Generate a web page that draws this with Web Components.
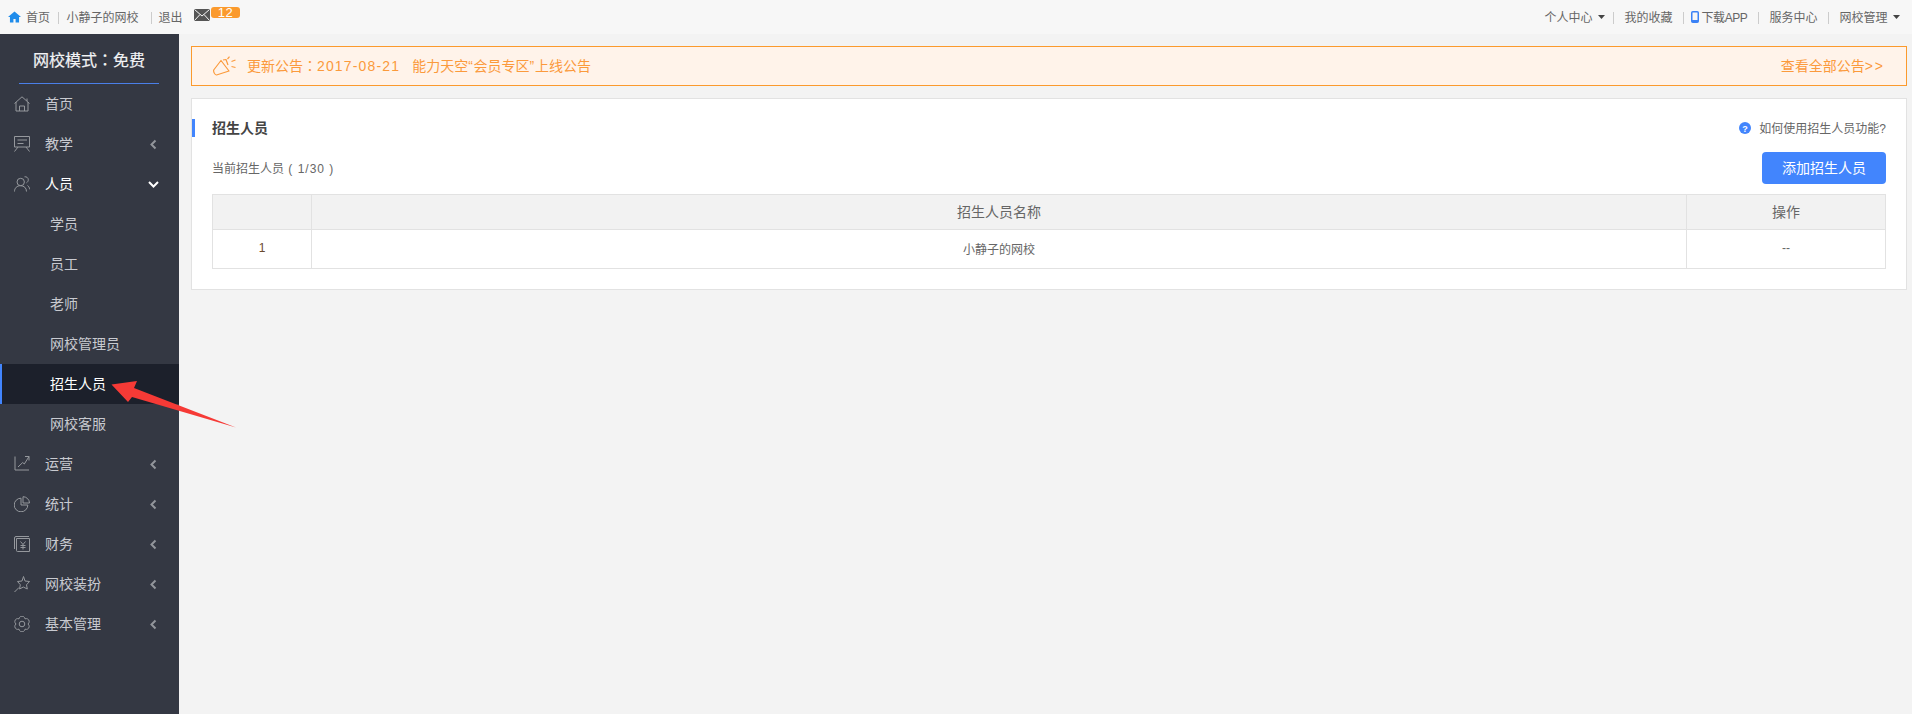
<!DOCTYPE html>
<html lang="zh-CN"><head><meta charset="utf-8"><title>招生人员</title>
<style>
html,body{margin:0;height:100%}
body{font:12px "Liberation Sans","Noto Sans CJK SC",sans-serif;color:#555;background:#f3f3f3;overflow:hidden}
</style></head><body>
<app-shell>
  <top-bar slot="top"></top-bar>
  <side-bar slot="side" before="网校模式" after="免费">
    <side-item label="首页" icon="home"></side-item>
    <side-item label="教学" icon="teach" arrow="left"></side-item>
    <side-item label="人员" icon="people" arrow="down" open></side-item>
    <side-item label="学员" sub></side-item>
    <side-item label="员工" sub></side-item>
    <side-item label="老师" sub></side-item>
    <side-item label="网校管理员" sub></side-item>
    <side-item label="招生人员" sub active></side-item>
    <side-item label="网校客服" sub></side-item>
    <side-item label="运营" icon="chart" arrow="left"></side-item>
    <side-item label="统计" icon="pie" arrow="left"></side-item>
    <side-item label="财务" icon="money" arrow="left"></side-item>
    <side-item label="网校装扮" icon="star" arrow="left"></side-item>
    <side-item label="基本管理" icon="gear" arrow="left"></side-item>
  </side-bar>
  <notice-bar></notice-bar>
  <staff-panel></staff-panel>
  <red-arrow slot="over"></red-arrow>
</app-shell>
<script>
const def=(name,html)=>customElements.define(name,class extends HTMLElement{
  constructor(){super();this.attachShadow({mode:'open'});if(typeof html!=='function')this.shadowRoot.innerHTML=html;}
  connectedCallback(){ if(typeof html==='function')this.shadowRoot.innerHTML=html(this); }
});

def('app-shell',`<style>
:host{display:grid;grid-template-columns:179px 1fr;grid-template-rows:34px 1fr;width:1912px;height:714px;position:relative;overflow:hidden}
.top{grid-column:1/3}
main{padding:12px 5px 0 12px;display:flex;flex-direction:column;gap:12px;min-width:0}
</style>
<div class="top"><slot name="top"></slot></div>
<slot name="side"></slot>
<main><slot></slot></main>
<slot name="over"></slot>`);

const caret=`<svg width="7" height="4" viewBox="0 0 7 4"><path d="M0 0h7L3.500 4z" fill="#444"/></svg>`;
def('top-bar',`<style>
:host{display:flex;justify-content:space-between;height:34px;background:#f7f7f7;color:#666;font-size:12px}
.l,.r{display:flex;align-items:center;height:34px}
.l{padding-left:8px}
.r{padding-right:12px}
.t{margin-bottom:2px}
.sep{width:1px;height:12px;background:#ccc;margin-top:2px}
.l .sep{margin:2px 8px 0 7.500px}
.r .sep{margin:2px 10.500px 0}
.l svg.h{margin-right:5px}
.mail{display:flex;align-self:flex-start;margin:7px 0 0 11.500px}
.mail svg{margin-top:2px}
.badge{width:29px;height:11px;border-radius:3px;background:#fb9a2d;color:#fff;font-size:13px;line-height:12px;text-align:center;letter-spacing:.5px;margin-left:1px}
.c{margin-left:5.500px;display:flex}
.ph{margin-right:2px}
.app{letter-spacing:-.4px}
</style>
<div class="l">
<svg class="h" width="13" height="12" viewBox="0 0 12 12" preserveAspectRatio="none"><path d="M6 .5 0 6h1.800v5.500H5V8h2v3.500h3.200V6H12z" fill="#1f8ceb"/></svg>
<span class="t">首页</span><i class="sep"></i><span class="t">小静子的网校</span><i class="sep" style="margin:2px 7px 0 12px"></i><span class="t">退出</span>
<span class="mail"><svg width="16" height="12" viewBox="0 0 16 12"><rect width="16" height="12" rx="1" fill="#555"/><path d="M.5.5 8 7 15.500.5M.5 11.500 6 5.500M15.500 11.500 10 5.500" stroke="#f7f7f7" stroke-width="1" fill="none"/></svg><span class="badge">12</span></span>
</div>
<div class="r">
<span class="t">个人中心</span><span class="c">${caret}</span><i class="sep" style="margin-left:8px"></i><span class="t">我的收藏</span><i class="sep"></i>
<svg class="ph" style="margin-left:-3px" width="8" height="12" viewBox="0 0 8 12"><rect x=".75" y=".75" width="6.500" height="10.500" rx="1" fill="none" stroke="#3b82f6" stroke-width="1.500"/><rect x="1" y="9" width="6" height="2" fill="#3b82f6"/></svg>
<span class="t app">下载APP</span><i class="sep"></i><span class="t">服务中心</span><i class="sep"></i><span class="t">网校管理</span><span class="c">${caret}</span>
</div>`);

def('side-bar',h=>`<style>
:host{display:block;background:#343843;color:#c8cad0}
h1{margin:0 20px 0 19px;height:50px;box-sizing:border-box;border-bottom:1px solid #4a7fe8;font-size:16px;font-weight:400;color:#f2f3f5;text-align:center;line-height:50px;-webkit-text-stroke:.2px #f2f3f5}
h1 span{font-family:"Noto Sans CJK TC",sans-serif}
nav{display:flex;flex-direction:column}
</style><h1>${h.getAttribute('before')}<span lang="zh-TW">：</span>${h.getAttribute('after')}</h1><nav><slot></slot></nav>`);

let gear='';
for(let k=0;k<6;k++){
  const a=k*Math.PI/3-Math.PI/2,p=(r,d)=>{const t=a+d*Math.PI/180;return (8+r*Math.cos(t)).toFixed(2)+' '+(8+r*Math.sin(t)).toFixed(2)};
  gear+=(k?'L':'M')+p(6,-30)+'Q'+p(7.400,-20)+' '+p(7.600,-11)+'Q'+p(8.300,0)+' '+p(7.600,11)+'Q'+p(7.400,20)+' '+p(6,30);
}
gear+='Z';
const I={
home:`<path d="M.5 7.500 8 .8l7.500 6.700M2 6V15h12V6M5.500 15v-5h5v5M13 2.500V5"/>`,
teach:`<path d="M.5 .5h15V11H.5zM3.500 4h9.500M3.500 7.500H9.500M4 11 .5 15.500M12 11l3.500 4.500"/>`,
people:`<circle cx="6.700" cy="6" r="3.700"/><path d="M.5 15.500c0-3.500 2.500-5.800 6-5.800s6 2.300 6 5.800M10.500 .8c2-.4 3.800 1 3.800 3 0 1.300-.8 2.400-1.800 3M13.500 9.500c1.300.8 2 2.300 2.100 3.800"/>`,
chart:`<path d="M1 .5V14H15M4 11l4.700-4.500L10.300 8 15 .5M11 .5h4V4.500"/>`,
pie:`<path d="M7 2.200A6.800 6.800 0 1 0 13.800 9H7zM9 .7A6.500 6.500 0 0 1 15.500 7H9z"/>`,
money:`<path d="M15 .5H2Q.5 .5 .5 2V13M2.500 2.500h13V15.500H3.500Q2.500 15.500 2.500 14.500zM6.500 5.500 9 8.500 11.500 5.500M9 8.500V13.500M6.500 9.500h5M6.500 11.500h5"/>`,
star:`<path d="M9.500 .5 11 5l4.500 .5-3 3.300.8 4.200-4-2-3.700 2 .7-4.300L3.500 5.500 8 5zM.5 16 5 11.500"/>`,
gear:`<path d="${gear}"/><circle cx="8" cy="8" r="2.800"/>`
};
def('side-item',h=>{
 const a=h.getAttribute('arrow'),ic=h.getAttribute('icon');
 const arrow=a==='left'?`<svg class="ar" width="7" height="11" viewBox="0 0 7 11"><path d="M5.500 1.500 1.500 5.500 5.500 9.500" fill="none" stroke="#92959b" stroke-width="2"/></svg>`:
 a==='down'?`<svg class="ar dn" width="11" height="7" viewBox="0 0 11 7"><path d="M1 1 5.500 5.500 10 1" fill="none" stroke="#fff" stroke-width="2"/></svg>`:'';
 return `<style>
:host{display:flex;align-items:center;height:40px;box-sizing:border-box;font-size:14px;padding-left:14px;position:relative}
:host([sub]){padding-left:50px}
:host([open]){color:#fff}
:host([active]){background:#1c202b;color:#fff;border-left:2px solid #4285fd;padding-left:48px}
span{margin-bottom:2px}
.ic{width:16px;height:16px;margin-right:15px;flex:none;fill:none;stroke:#95989d;stroke-width:1}
.ar{margin-left:auto;margin-right:22px;margin-top:1px}
.dn{margin-right:20px}
</style>${ic?`<svg class="ic" viewBox="0 0 16 16">${I[ic]}</svg>`:''}<span>${h.getAttribute('label')}</span>${arrow}`;
});

def('notice-bar',`<style>
:host{display:flex;align-items:center;height:40px;box-sizing:border-box;border:1px solid #fb9a2d;background:#fff3ea;color:#fb9a3c;font-size:14px;padding:0 21px 0 21px}
svg{margin-right:10px;fill:none;stroke:#fb9a3c;stroke-width:1.200;stroke-linejoin:round}
.m{white-space:pre;margin-bottom:2px}
.d{letter-spacing:1.150px;margin-right:2px}
.co{font-family:"Noto Sans CJK TC",sans-serif}
.q{letter-spacing:.7px}
.all{margin-left:auto}
.gt{letter-spacing:2px}
</style>
<svg width="24" height="20" viewBox="0 0 24 20"><path d="M.7 14 8 4.500 16 15 3.500 19Q2.500 19 1.500 17.500.3 15.500.7 14zM10 4 13 3.500 15 9M14.500 3 16.500 .7M18.500 5.500 22.500 4M18.500 10.500 22.500 11.500"/></svg>
<span class="m">更新公告<span class="co" lang="zh-TW">：</span><span class="d">2017-08-21  </span>能力天空<span class="q">“</span>会员专区<span class="q">”</span>上线公告</span><span class="m all">查看全部公告<span class="gt">&gt;&gt;</span></span>`);

def('staff-panel',`<style>
:host{display:block;height:192px;box-sizing:border-box;background:#fff;border:1px solid #e2e2e2;padding:0 20px;color:#555;position:relative}
.head{display:flex;align-items:center;justify-content:space-between;height:18px;margin:20px 0 0 -20px}
.title{display:flex;align-items:center;font-size:14px;font-weight:700;color:#444}
.title i{width:3px;height:18px;background:#4285fd;margin-right:17px}
.title span{margin-bottom:2px}
.help{display:flex;align-items:center;gap:8px;color:#666}
.help svg{display:block}
.help span{margin-bottom:2px}
.bar{display:flex;justify-content:space-between;align-items:center;margin-top:15px;color:#666}
.bar>span{margin-bottom:2px}
.n{letter-spacing:1px;white-space:pre}
button{width:124px;height:32px;border:0;border-radius:4px;background:#4285fd;color:#fff;font:14px "Liberation Sans","Noto Sans CJK SC",sans-serif;padding:0 0 2px}
table{border-collapse:collapse;width:100%;table-layout:fixed;margin-top:10px}
th,td{border:1px solid #e2e2e2;text-align:center;padding:0 0 2px;color:#666}
th{height:32px;background:#f2f2f2;font-size:14px;font-weight:400}
td{height:36px;font-size:12px}
</style>
<div class="head"><span class="title"><i></i><span>招生人员</span></span>
<span class="help"><svg width="12" height="12" viewBox="0 0 12 12"><circle cx="6" cy="6" r="6" fill="#4285fd"/><text x="6" y="9.500" text-anchor="middle" font-size="9" font-weight="700" fill="#fff" font-family="Liberation Sans">?</text></svg><span>如何使用招生人员功能?</span></span></div>
<div class="bar"><span>当前招生人员<span class="n"> ( 1/30 )</span></span><button>添加招生人员</button></div>
<table><colgroup><col style="width:99px"><col><col style="width:199px"></colgroup>
<tr><th></th><th>招生人员名称</th><th>操作</th></tr>
<tr><td style="color:#6b4a2e">1</td><td>小静子的网校</td><td>--</td></tr></table>`);

def('red-arrow',`<style>
:host{position:absolute;left:108px;top:376px;display:block;width:130px;height:56px;pointer-events:none}
</style><svg width="130" height="56" viewBox="108 376 130 56"><path d="M111.500 384.500 137 381 134 388 236 427.500 132 397 128 402z" fill="#f63a36"/></svg>`);
</script>
</body></html>
